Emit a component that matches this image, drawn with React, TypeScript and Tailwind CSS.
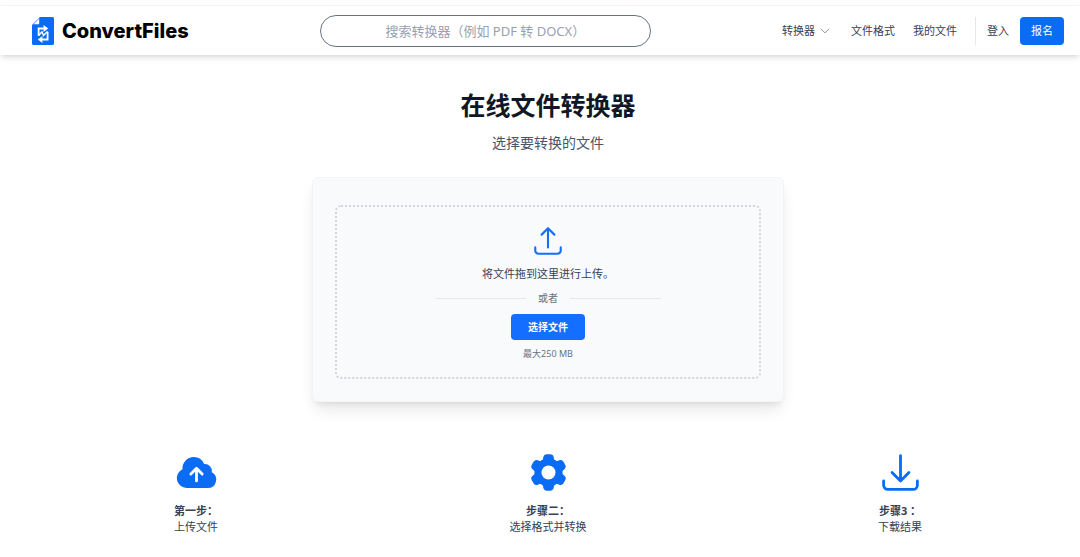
import type { ReactNode } from 'react'
import {
  HiCloudArrowUp,
  HiCog6Tooth,
  HiOutlineArrowDownTray,
  HiOutlineArrowUpTray,
  HiOutlineChevronDown,
} from 'react-icons/hi2'

function Logo() {
  return (
    <a href="#" className="flex items-center gap-2 text-black">
      <svg viewBox="0 0 22 28" className="h-7 w-[22px]" aria-hidden="true">
        <path d="M8 0h12.5a1.5 1.5 0 0 1 1.5 1.5v25a1.5 1.5 0 0 1-1.5 1.5h-19A1.5 1.5 0 0 1 0 26.5V8z" fill="#0a6cf5" />
        <path d="M7.2 1.5v5.7H1.5z" fill="#fff" />
        <g fill="none" stroke="#fff" strokeWidth="1.8">
          <path d="M6.6 18.8v-7.3h5.500" />
          <path d="M15.6 14.8v7.7H10" />
          <path d="M6.6 18.5l3.4-3.7 1.500 3.7 4-4" strokeWidth="1.5" />
        </g>
        <path d="M11.6 8l4.6 3.5-4.6 3.5zM10.4 19l-4.6 3.5 4.6 3.5z" fill="#fff" />
      </svg>
      <span className="font-['Inter',sans-serif] text-[20px] leading-7 font-extrabold">ConvertFiles</span>
    </a>
  )
}

function Header() {
  return (
    <header className="border-t border-gray-100 bg-white shadow-md">
      <div className="flex h-[49px] items-center justify-between pr-4 pl-8">
        <Logo />
        <input
          type="text"
          aria-label="搜索转换器"
          placeholder="搜索转换器（例如 PDF 转 DOCX）"
          className="h-8 w-[331px] rounded-full border border-gray-500 text-center text-[13px] placeholder:text-gray-400"
        />
        <nav className="flex items-center text-[11px] leading-4 text-gray-700">
          <button className="flex items-center gap-1">
            转换器
            <HiOutlineChevronDown className="size-3 text-gray-500" />
          </button>
          <a href="#" className="ml-5">文件格式</a>
          <a href="#" className="ml-[18px]">我的文件</a>
          <a href="#" className="ml-[18px] flex h-7 items-center border-l border-gray-200 pl-[11px]">登入</a>
          <a href="#" className="ml-[11px] flex h-7 items-center rounded-sm bg-[#0a6cf5] px-[11px] text-white">报名</a>
        </nav>
      </div>
    </header>
  )
}

function Uploader() {
  return (
    <section className="mt-[22px] w-full max-w-[472px] rounded-md border border-gray-100 bg-gray-50 px-[22px] pt-[27px] pb-[22px] shadow-lg">
      <div className="flex flex-col items-center rounded-md border-2 border-dotted border-gray-300 py-[17px]">
        <HiOutlineArrowUpTray className="size-[34px] text-[#1570f5]" />
        <p className="mt-2 text-[11px] leading-4 text-gray-700">将文件拖到这里进行上传。</p>
        <div className="mt-2 flex w-[225px] items-center gap-3 text-[10px] leading-4 text-gray-500">
          <span className="h-px flex-1 bg-gray-200" />
          或者
          <span className="h-px flex-1 bg-gray-200" />
        </div>
        <button className="mt-2 h-[26px] rounded-sm bg-[#146eff] px-[17px] text-[10px] leading-4 font-bold text-white">
          选择文件
        </button>
        <p className="mt-2 text-[9px] leading-3 text-gray-500">最大250 MB</p>
      </div>
    </section>
  )
}

function Step({ icon, title, text }: { icon: ReactNode; title: string; text: string }) {
  return (
    <li className="flex flex-col items-center text-[11px] text-gray-700">
      {icon}
      <div className="mt-2">
        <h2 className="text-center leading-4 font-bold">{title}</h2>
        <p className="leading-4">{text}</p>
      </div>
    </li>
  )
}

export default function App() {
  return (
    <div className="bg-white pt-[5px] font-['Noto_Sans','Noto_Sans_CJK_SC',sans-serif]">
      <Header />
      <main className="flex flex-col items-center pt-8 pr-1 pl-5">
        <h1 className="text-[25px] leading-9 font-bold text-gray-900">在线文件转换器</h1>
        <p className="mt-2 text-[14px] leading-6 text-gray-600">选择要转换的文件</p>
        <Uploader />
        <ul className="mt-12 grid w-full grid-cols-3">
          <Step icon={<HiCloudArrowUp className="size-[45px] text-[#0a6cf5]" />} title="第一步：" text="上传文件" />
          <Step icon={<HiCog6Tooth className="size-[45px] text-[#0a6cf5]" />} title="步骤二：" text="选择格式并转换" />
          <Step icon={<HiOutlineArrowDownTray className="size-[45px] text-[#0a6cf5]" />} title="步骤3 ：" text="下载结果" />
        </ul>
      </main>
    </div>
  )
}
